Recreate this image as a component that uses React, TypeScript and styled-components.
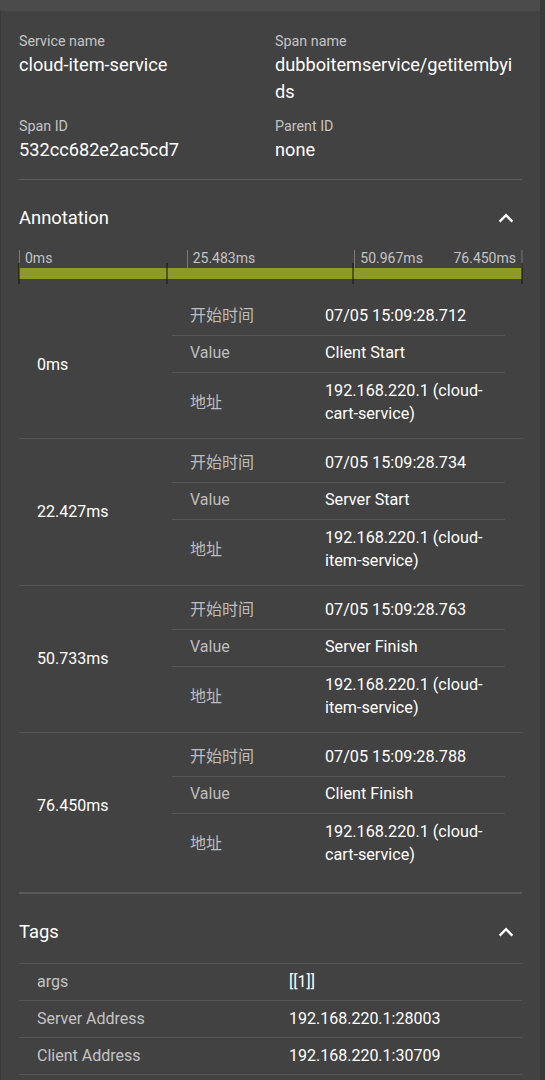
import React from 'react'
import styled, { createGlobalStyle } from 'styled-components'

const GlobalStyle = createGlobalStyle`
  html, body {
    margin: 0;
    padding: 0;
    background: #424242;
  }
  body {
    font-family: Roboto, "Noto Sans CJK SC", sans-serif;
    color: #fff;
  }
`

interface Annotation {
  offset: string
  at: number
  time: string
  value: string
  address: string
}

const TOTAL = 76.45

const annotations: Annotation[] = [
  { offset: '0ms', at: 0, time: '07/05 15:09:28.712', value: 'Client Start', address: '192.168.220.1 (cloud-cart-service)' },
  { offset: '22.427ms', at: 22.427, time: '07/05 15:09:28.734', value: 'Server Start', address: '192.168.220.1 (cloud-item-service)' },
  { offset: '50.733ms', at: 50.733, time: '07/05 15:09:28.763', value: 'Server Finish', address: '192.168.220.1 (cloud-item-service)' },
  { offset: '76.450ms', at: 76.45, time: '07/05 15:09:28.788', value: 'Client Finish', address: '192.168.220.1 (cloud-cart-service)' },
]

const scale = ['0ms', '25.483ms', '50.967ms', '76.450ms']

const tags = [
  { key: 'args', value: '[[1]]' },
  { key: 'Server Address', value: '192.168.220.1:28003' },
  { key: 'Client Address', value: '192.168.220.1:30709' },
]

function ChevronUp() {
  return (
    <svg width="16" height="10" viewBox="0 0 16 10">
      <polyline points="1.6,8.6 8,2.2 14.4,8.6" fill="none" stroke="#fff" strokeWidth="2.4" />
    </svg>
  )
}

function App() {
  return (
    <>
      <GlobalStyle />
      <Page>
        <Main>
          <TopStrip />
          <Panel>
            <Fields>
              <Field>
                <Label>Service name</Label>
                <Value>cloud-item-service</Value>
              </Field>
              <Field>
                <Label>Span name</Label>
                <Value>dubboitemservice/getitembyids</Value>
              </Field>
              <Field>
                <Label>Span ID</Label>
                <Value>532cc682e2ac5cd7</Value>
              </Field>
              <Field>
                <Label>Parent ID</Label>
                <Value>none</Value>
              </Field>
            </Fields>

            <Section>
              <SectionHeader>
                <SectionTitle>Annotation</SectionTitle>
                <Toggle>
                  <ChevronUp />
                </Toggle>
              </SectionHeader>

              <Timeline>
                <Scale>
                  {scale.map((s, i) => (
                    <ScaleMark key={s} $last={i === scale.length - 1} style={{ left: `${(i / (scale.length - 1)) * 100}%` }}>
                      <span>{s}</span>
                    </ScaleMark>
                  ))}
                </Scale>
                <Bar>
                  {annotations.map((a) => (
                    <Tick key={a.offset} style={{ left: `${(a.at / TOTAL) * 100}%` }} />
                  ))}
                </Bar>
              </Timeline>

              {annotations.map((a, i) => (
                <Block key={a.offset} $last={i === annotations.length - 1}>
                  <Offset>{a.offset}</Offset>
                  <Rows>
                    <Row>
                      <RowKey>开始时间</RowKey>
                      <RowValue>{a.time}</RowValue>
                    </Row>
                    <Row>
                      <RowKey>Value</RowKey>
                      <RowValue>{a.value}</RowValue>
                    </Row>
                    <Row $tall>
                      <RowKey>地址</RowKey>
                      <RowValue>{a.address}</RowValue>
                    </Row>
                  </Rows>
                </Block>
              ))}
            </Section>

            <Section $thick>
              <SectionHeader>
                <SectionTitle>Tags</SectionTitle>
                <Toggle>
                  <ChevronUp />
                </Toggle>
              </SectionHeader>
              <TagTable>
                {tags.map((t) => (
                  <TagRow key={t.key}>
                    <TagKey>{t.key}</TagKey>
                    <TagValue>{t.value}</TagValue>
                  </TagRow>
                ))}
              </TagTable>
            </Section>
          </Panel>
        </Main>
        <Track />
      </Page>
    </>
  )
}

const Page = styled.div`
  display: flex;
  width: 545px;
  height: 1080px;
  overflow: hidden;
`

const Main = styled.div`
  flex: 1;
  display: flex;
  flex-direction: column;
  min-width: 0;
`

const TopStrip = styled.div`
  height: 11px;
  flex-shrink: 0;
  background: #4b4b4b;
`

const Track = styled.div`
  width: 5px;
  flex-shrink: 0;
  background: #393939;
`

const Panel = styled.div`
  flex: 1;
  border-left: 1px solid #393939;
  padding: 21px 18px 0 18px;
  background: #424242;
`

const Fields = styled.div`
  display: grid;
  grid-template-columns: 256px 1fr;
  row-gap: 12px;
  padding-bottom: 16px;
`

const Field = styled.div`
  display: flex;
  flex-direction: column;
  min-width: 0;
`

const Label = styled.div`
  font-size: 14.3px;
  line-height: 18px;
  color: #c4c4c4;
`

const Value = styled.div`
  font-size: 18.2px;
  line-height: 27px;
  color: #fff;
  word-break: break-all;
  padding-top: 1px;
`

const Section = styled.div<{ $thick?: boolean }>`
  border-top: ${({ $thick }) => ($thick ? '2px solid #5a5a5a' : '1px solid #5a5a5a')};
  padding-bottom: 13px;
`

const SectionHeader = styled.div`
  display: flex;
  align-items: center;
  justify-content: space-between;
  padding: 26px 0 19px;
`

const SectionTitle = styled.div`
  font-size: 18.4px;
  line-height: 24px;
  color: #fff;
`

const Toggle = styled.div`
  display: flex;
  align-items: center;
  margin-right: 8px;
`

const Timeline = styled.div`
  position: relative;
  margin-top: 1px;
  height: 34px;
  margin-bottom: 8px;
`

const Scale = styled.div`
  position: relative;
  height: 18px;
`

const ScaleMark = styled.div<{ $last: boolean }>`
  position: absolute;
  top: 0;
  height: 18px;
  border-left: 1px solid #7a7a7a;
  transform: ${({ $last }) => ($last ? 'translateX(-100%)' : 'none')};
  ${({ $last }) => ($last ? 'border-left: none; border-right: 1px solid #7a7a7a;' : '')}

  span {
    display: block;
    padding: 0 5px;
    font-size: 14px;
    line-height: 16px;
    color: #c4c4c4;
    white-space: nowrap;
  }
`

const Bar = styled.div`
  position: relative;
  height: 11px;
  background: #8e9a28;
`

const Tick = styled.div`
  position: absolute;
  top: -5px;
  width: 1px;
  height: 21px;
  background: #111;
  transform: translateX(-0.5px);
`

const Block = styled.div<{ $last: boolean }>`
  display: grid;
  grid-template-columns: 153px 1fr;
  padding: 7px 17px 5px 0;
  border-bottom: ${({ $last }) => ($last ? 'none' : '1px solid #555')};
`

const Offset = styled.div`
  display: flex;
  align-items: center;
  padding: 0 0 4px 18px;
  font-size: 16px;
  color: #fff;
`

const Rows = styled.div`
  display: flex;
  flex-direction: column;
`

const Row = styled.div<{ $tall?: boolean }>`
  display: grid;
  grid-template-columns: 135px 1fr;
  align-items: center;
  min-height: ${({ $tall }) => ($tall ? '60px' : '37px')};
  box-sizing: border-box;
  padding: ${({ $tall }) => ($tall ? '0 0 2px' : '0 0 3px')};
  border-bottom: 1px solid #555;

  &:last-child {
    border-bottom: none;
  }
`

const RowKey = styled.div`
  padding-left: 18px;
  font-size: 16px;
  line-height: 23px;
  color: #bdbdbd;
`

const RowValue = styled.div`
  padding: 0 10px 0 18px;
  font-size: 16.2px;
  line-height: 23px;
  color: #fff;
`

const TagTable = styled.div`
  border-top: 1px solid #555;
`

const TagRow = styled.div`
  display: grid;
  grid-template-columns: 270px 1fr;
  align-items: center;
  box-sizing: border-box;
  height: 37px;
  padding-bottom: 2px;
  border-bottom: 1px solid #555;
`

const TagKey = styled.div`
  padding-left: 18px;
  font-size: 16px;
  color: #c4c4c4;
`

const TagValue = styled.div`
  font-size: 16px;
  color: #fff;
`

export default App
